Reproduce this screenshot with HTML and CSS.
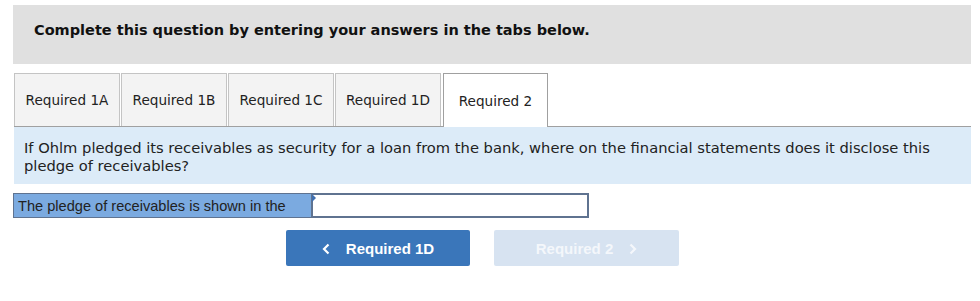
FILE: index.html
```html
<!DOCTYPE html>
<html>
<head>
<meta charset="utf-8">
<link rel="stylesheet" href="styles.css">
</head>
<body>
<div class="page">
  <div class="header">Complete this question by entering your answers in the tabs below.</div>
  <div class="tabs">
    <div class="tab">Required 1A</div>
    <div class="tab">Required 1B</div>
    <div class="tab">Required 1C</div>
    <div class="tab">Required 1D</div>
    <div class="tab active">Required 2</div>
  </div>
  <div class="question">If Ohlm pledged its receivables as security for a loan from the bank, where on the financial statements does it disclose this pledge of receivables?</div>
  <div class="answer">
    <div class="label">The pledge of receivables is shown in the</div>
    <div class="input"><span class="marker"></span></div>
  </div>
  <div class="nav">
    <div class="btn prev"><svg class="chev" width="8" height="12" viewBox="0 0 8 12"><path d="M6.5 1.5 L2 6 L6.5 10.5" fill="none" stroke="#fff" stroke-width="2.2"/></svg>Required 1D</div>
    <div class="btn next">Required 2<svg class="chev r" width="8" height="12" viewBox="0 0 8 12"><path d="M1.5 1.5 L6 6 L1.5 10.5" fill="none" stroke="#f4f7fb" stroke-width="2.2"/></svg></div>
  </div>
</div>
</body>
</html>
```
FILE: styles.css
```css
html, body { margin: 0; padding: 0; background: #fff; }
.page { padding: 5px 0 0 13px; width: 958px; font-family: "DejaVu Sans", Verdana, sans-serif; }
.header { height: 59px; background: #e0e0e0; box-sizing: border-box; padding: 17px 0 0 21px; font-weight: bold; font-size: 14.5px; color: #111; }
.tabs { display: flex; gap: 1px; margin: 9px 0 0 1px; border-bottom: 1px solid #a0a0a0; }
.tab { width: 106px; height: 53px; box-sizing: border-box; border: 1px solid #c4c4c4; border-bottom: none; background: #f3f3f3; display: flex; align-items: center; justify-content: center; font-size: 13.6px; color: #222; }
.tab.active { background: #fff; border-color: #a0a0a0; margin-bottom: -1px; height: 54px; width: 105px; margin-left: 1px; }
.question { margin-left: 1px; height: 57px; box-sizing: border-box; background: #dcebf8; padding: 12px 10px 0 10px; font-size: 14.7px; line-height: 18px; color: #222; }
.answer { display: flex; margin-top: 9px; height: 25px; }
.label { width: 298px; box-sizing: border-box; background: #7baae0; border: 1px solid #5f7390; border-right: none; font-family: "Liberation Sans", Arial, sans-serif; font-size: 14.6px; color: #222; padding: 4px 0 0 4px; white-space: nowrap; }
.input { position: relative; width: 278px; box-sizing: border-box; border: 2px solid #5f7390; background: #fff; }
.marker { position: absolute; left: -1px; top: -1px; width: 0; height: 0; border-top: 4px solid transparent; border-bottom: 4px solid transparent; border-left: 4px solid #3f6fb0; }
.nav { display: flex; gap: 24px; margin: 12px 0 0 273px; }
.btn { width: 184px; height: 36px; box-sizing: border-box; padding-top: 1px; border-radius: 2px; display: flex; align-items: center; justify-content: center; font-family: "Liberation Sans", Arial, sans-serif; font-weight: bold; font-size: 15px; color: #fff; }
.btn.prev { background: #3a76ba; }
.btn.next { background: #d7e3f1; width: 185px; color: #f4f7fb; }
.chev { margin-right: 16px; }
.chev.r { margin: 0 0 0 16px; }
```
